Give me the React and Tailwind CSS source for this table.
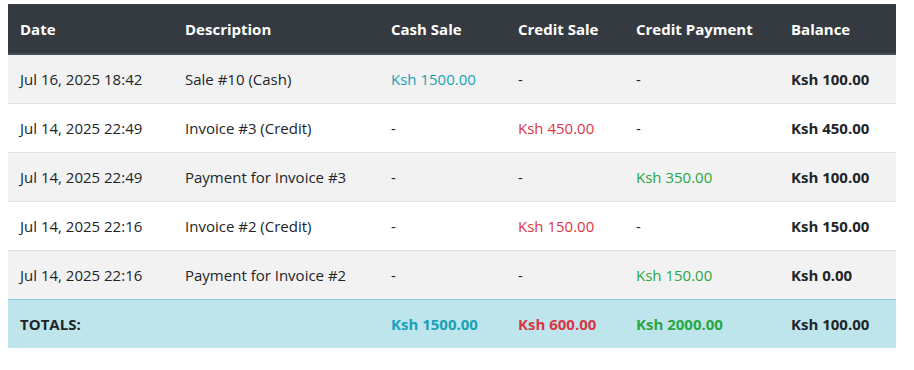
import React from "react";

const rows = [
  { date: "Jul 16, 2025 18:42", desc: "Sale #10 (Cash)", cash: "Ksh 1500.00", credit: "-", pay: "-", bal: "Ksh 100.00" },
  { date: "Jul 14, 2025 22:49", desc: "Invoice #3 (Credit)", cash: "-", credit: "Ksh 450.00", pay: "-", bal: "Ksh 450.00" },
  { date: "Jul 14, 2025 22:49", desc: "Payment for Invoice #3", cash: "-", credit: "-", pay: "Ksh 350.00", bal: "Ksh 100.00" },
  { date: "Jul 14, 2025 22:16", desc: "Invoice #2 (Credit)", cash: "-", credit: "Ksh 150.00", pay: "-", bal: "Ksh 150.00" },
  { date: "Jul 14, 2025 22:16", desc: "Payment for Invoice #2", cash: "-", credit: "-", pay: "Ksh 150.00", bal: "Ksh 0.00" },
];

function Th({ children }) {
  return (
    <th className="text-left px-[12px] py-[12px] border-t border-b-2 border-t-[#3a4148] border-b-[#454d55] whitespace-nowrap">
      {children}
    </th>
  );
}

export default function App() {
  return (
    <div
      className="bg-white pt-[4px] px-[8px] w-[914px] h-[370px] text-[#212529]"
      style={{ fontFamily: '"Open Sans", "Noto Sans", sans-serif' }}
    >
      <table className="w-[888px] table-fixed border-collapse text-[15px] leading-[24px]">
        <colgroup>
          <col className="w-[165px]" />
          <col className="w-[206px]" />
          <col className="w-[127px]" />
          <col className="w-[118px]" />
          <col className="w-[155px]" />
          <col className="w-[117px]" />
        </colgroup>
        <thead>
          <tr className="bg-[#343a40] text-white font-bold">
            <Th>Date</Th>
            <Th>Description</Th>
            <Th>Cash Sale</Th>
            <Th>Credit Sale</Th>
            <Th>Credit Payment</Th>
            <Th>Balance</Th>
          </tr>
        </thead>
        <tbody>
          {rows.map((r, i) => {
            const cell =
              "px-[12px] py-[12px] whitespace-nowrap " +
              (i === 0 ? "" : "border-t border-[#dee2e6] ");
            return (
              <tr key={i} className={i % 2 === 0 ? "bg-[#f2f2f2]" : "bg-white"}>
                <td className={cell}>{r.date}</td>
                <td className={cell}>{r.desc}</td>
                <td className={cell + (r.cash === "-" ? "" : "text-[#17a2b8]")}>{r.cash}</td>
                <td className={cell + (r.credit === "-" ? "" : "text-[#dc3545]")}>{r.credit}</td>
                <td className={cell + (r.pay === "-" ? "" : "text-[#28a745]")}>{r.pay}</td>
                <td className={cell + "font-bold"}>{r.bal}</td>
              </tr>
            );
          })}
          <tr className="bg-[#bee5eb] font-bold">
            <td className="px-[12px] py-[12px] border-t border-[#86cfda] whitespace-nowrap">TOTALS:</td>
            <td className="px-[12px] py-[12px] border-t border-[#86cfda]"></td>
            <td className="px-[12px] py-[12px] border-t border-[#86cfda] whitespace-nowrap text-[#17a2b8]">Ksh 1500.00</td>
            <td className="px-[12px] py-[12px] border-t border-[#86cfda] whitespace-nowrap text-[#dc3545]">Ksh 600.00</td>
            <td className="px-[12px] py-[12px] border-t border-[#86cfda] whitespace-nowrap text-[#28a745]">Ksh 2000.00</td>
            <td className="px-[12px] py-[12px] border-t border-[#86cfda] whitespace-nowrap">Ksh 100.00</td>
          </tr>
        </tbody>
      </table>
    </div>
  );
}
